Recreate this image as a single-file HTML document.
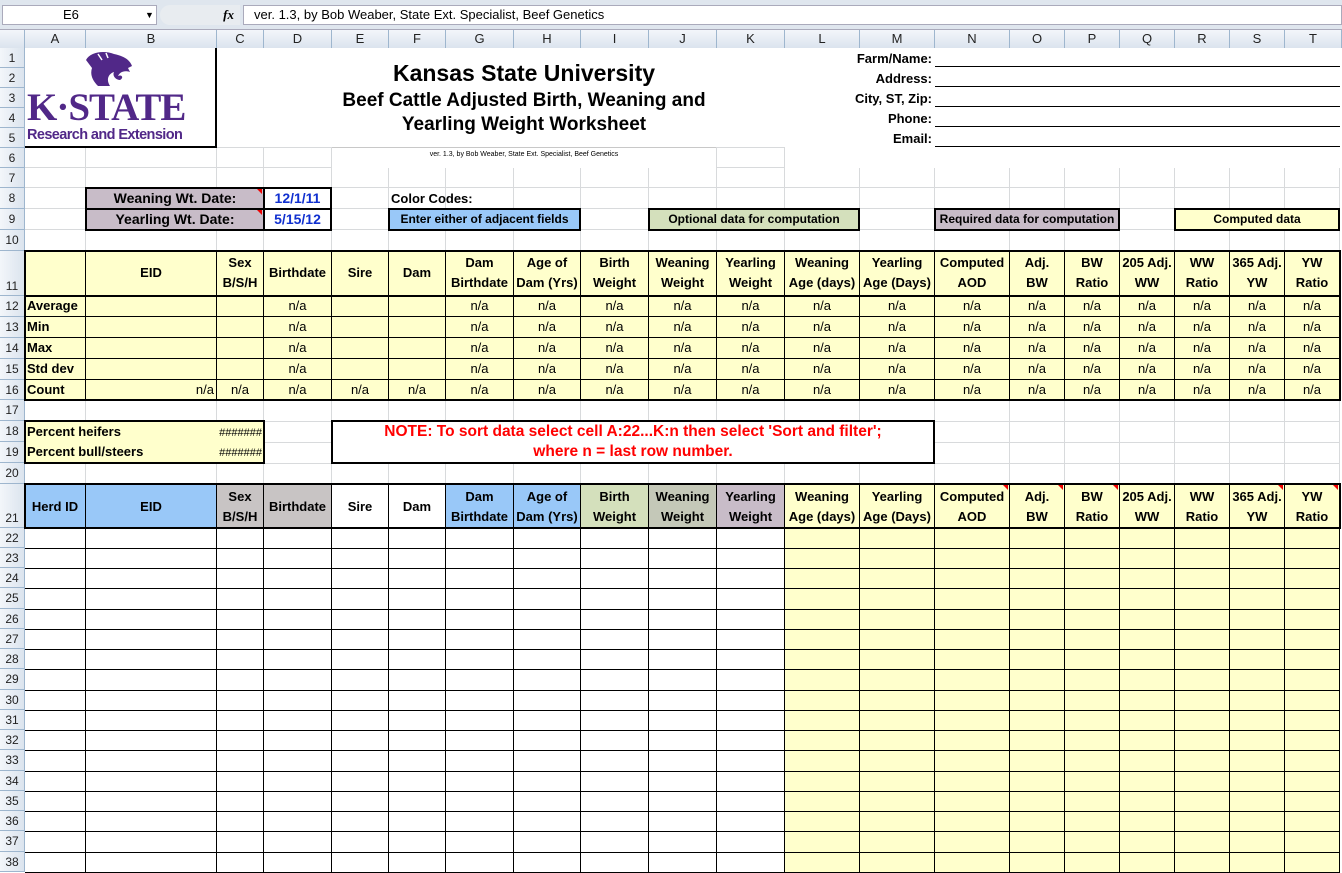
<!DOCTYPE html>
<html><head><meta charset="utf-8"><style>
*{box-sizing:border-box;margin:0;padding:0}
body{width:1342px;height:872px;overflow:hidden;background:#fff;font-family:"Liberation Sans",Arial,sans-serif;position:relative}
.a{position:absolute}
#fb{left:0;top:0;width:1342px;height:30px;background:#dfe6ee;border-bottom:1px solid #aab}
#grid{position:absolute;left:25px;top:48px;border-collapse:separate;border-spacing:0;table-layout:fixed;width:1315px}
#grid td{border-right:1px solid #d8dadc;border-bottom:1px solid #d8dadc;font-size:13px;font-weight:bold;text-align:center;line-height:20px;overflow:hidden;white-space:nowrap;padding:0 2px}
#grid tr.k td{border-right-color:#000;border-bottom-color:#000}
#grid td.n{font-weight:normal}
#grid td.l{text-align:left}
#grid td.r{text-align:right}
.y{background:#ffffcc}
.bl{background:#99c8f8}
.gn{background:#d4e0bc}
.gg{background:#c4c8b8}
.mv{background:#c8bcc8}
.gy{background:#c8c4c4}
.box{position:absolute;border:2px solid #000}
.ch{position:absolute;top:30px;height:18px;font-size:13px;color:#222;text-align:center;line-height:18px;border-right:1px solid #9eb6ce;background:linear-gradient(#f3f6fa,#dbe4ee)}
.rh{position:absolute;left:0;width:25px;font-size:12px;color:#222;text-align:center;border-bottom:1px solid #9eb6ce;background:linear-gradient(90deg,#f3f6fa,#dbe4ee);border-right:1px solid #9eb6ce}
.w{position:absolute;background:#fff}
.t{position:absolute;font-size:13px;font-weight:bold;white-space:nowrap}
.cc{text-align:center;font-size:12px;font-weight:bold;line-height:19px}
</style></head><body>
<div id="fb" class="a">
 <div class="a" style="left:2px;top:5px;width:155px;height:20px;background:#fff;border:1px solid #aab;font-size:13px;line-height:18px;padding-left:60px">E6<span style="position:absolute;left:142px;font-size:9px">▼</span></div>
 <div class="a" style="left:160px;top:5px;width:80px;height:20px;background:#e8ecf0;border-radius:10px 0 0 10px;font-style:italic;font-size:13px;line-height:20px;text-align:right;padding-right:6px;font-family:'Liberation Serif',serif;font-weight:bold">fx</div>
 <div class="a" style="left:243px;top:5px;width:1099px;height:20px;background:#fff;border:1px solid #aab;font-size:13px;line-height:18px;padding-left:10px">ver. 1.3, by Bob Weaber, State Ext. Specialist, Beef Genetics</div>
</div>
<div class="ch" style="left:0;width:25px"></div>
<div class="ch" style="left:25px;width:61px">A</div><div class="ch" style="left:86px;width:131px">B</div><div class="ch" style="left:217px;width:47px">C</div><div class="ch" style="left:264px;width:68px">D</div><div class="ch" style="left:332px;width:57px">E</div><div class="ch" style="left:389px;width:57px">F</div><div class="ch" style="left:446px;width:68px">G</div><div class="ch" style="left:514px;width:67px">H</div><div class="ch" style="left:581px;width:68px">I</div><div class="ch" style="left:649px;width:68px">J</div><div class="ch" style="left:717px;width:68px">K</div><div class="ch" style="left:785px;width:75px">L</div><div class="ch" style="left:860px;width:75px">M</div><div class="ch" style="left:935px;width:75px">N</div><div class="ch" style="left:1010px;width:55px">O</div><div class="ch" style="left:1065px;width:55px">P</div><div class="ch" style="left:1120px;width:55px">Q</div><div class="ch" style="left:1175px;width:55px">R</div><div class="ch" style="left:1230px;width:55px">S</div><div class="ch" style="left:1285px;width:57px">T</div>

<div class="rh" style="top:48px;height:20px;line-height:20px">1</div><div class="rh" style="top:68px;height:20px;line-height:20px">2</div><div class="rh" style="top:88px;height:20px;line-height:20px">3</div><div class="rh" style="top:108px;height:20px;line-height:20px">4</div><div class="rh" style="top:128px;height:20px;line-height:20px">5</div><div class="rh" style="top:148px;height:20px;line-height:20px">6</div><div class="rh" style="top:168px;height:20px;line-height:20px">7</div><div class="rh" style="top:188px;height:21px;line-height:21px">8</div><div class="rh" style="top:209px;height:21px;line-height:21px">9</div><div class="rh" style="top:230px;height:21px;line-height:21px">10</div><div class="rh" style="top:251px;height:45px;line-height:70px">11</div><div class="rh" style="top:296px;height:21px;line-height:21px">12</div><div class="rh" style="top:317px;height:21px;line-height:21px">13</div><div class="rh" style="top:338px;height:21px;line-height:21px">14</div><div class="rh" style="top:359px;height:21px;line-height:21px">15</div><div class="rh" style="top:380px;height:20px;line-height:20px">16</div><div class="rh" style="top:400px;height:21px;line-height:21px">17</div><div class="rh" style="top:421px;height:21px;line-height:21px">18</div><div class="rh" style="top:442px;height:21px;line-height:21px">19</div><div class="rh" style="top:463px;height:21px;line-height:21px">20</div><div class="rh" style="top:484px;height:44px;line-height:68px">21</div>
<div class="rh" style="top:528px;height:20px;line-height:20px">22</div><div class="rh" style="top:548px;height:20px;line-height:20px">23</div><div class="rh" style="top:568px;height:20px;line-height:20px">24</div><div class="rh" style="top:588px;height:21px;line-height:21px">25</div><div class="rh" style="top:609px;height:20px;line-height:20px">26</div><div class="rh" style="top:629px;height:20px;line-height:20px">27</div><div class="rh" style="top:649px;height:20px;line-height:20px">28</div><div class="rh" style="top:669px;height:21px;line-height:21px">29</div><div class="rh" style="top:690px;height:20px;line-height:20px">30</div><div class="rh" style="top:710px;height:20px;line-height:20px">31</div><div class="rh" style="top:730px;height:20px;line-height:20px">32</div><div class="rh" style="top:750px;height:21px;line-height:21px">33</div><div class="rh" style="top:771px;height:20px;line-height:20px">34</div><div class="rh" style="top:791px;height:20px;line-height:20px">35</div><div class="rh" style="top:811px;height:20px;line-height:20px">36</div><div class="rh" style="top:831px;height:21px;line-height:21px">37</div><div class="rh" style="top:852px;height:20px;line-height:20px">38</div>

<table id="grid">
<colgroup><col style="width:61px"><col style="width:131px"><col style="width:47px"><col style="width:68px"><col style="width:57px"><col style="width:57px"><col style="width:68px"><col style="width:67px"><col style="width:68px"><col style="width:68px"><col style="width:68px"><col style="width:75px"><col style="width:75px"><col style="width:75px"><col style="width:55px"><col style="width:55px"><col style="width:55px"><col style="width:55px"><col style="width:55px"><col style="width:55px"></colgroup>
<tr style="height:20px"><td></td><td></td><td></td><td></td><td></td><td></td><td></td><td></td><td></td><td></td><td></td><td></td><td></td><td></td><td></td><td></td><td></td><td></td><td></td><td></td></tr>
<tr style="height:20px"><td></td><td></td><td></td><td></td><td></td><td></td><td></td><td></td><td></td><td></td><td></td><td></td><td></td><td></td><td></td><td></td><td></td><td></td><td></td><td></td></tr>
<tr style="height:20px"><td></td><td></td><td></td><td></td><td></td><td></td><td></td><td></td><td></td><td></td><td></td><td></td><td></td><td></td><td></td><td></td><td></td><td></td><td></td><td></td></tr>
<tr style="height:20px"><td></td><td></td><td></td><td></td><td></td><td></td><td></td><td></td><td></td><td></td><td></td><td></td><td></td><td></td><td></td><td></td><td></td><td></td><td></td><td></td></tr>
<tr style="height:20px"><td></td><td></td><td></td><td></td><td></td><td></td><td></td><td></td><td></td><td></td><td></td><td></td><td></td><td></td><td></td><td></td><td></td><td></td><td></td><td></td></tr>
<tr style="height:20px"><td></td><td></td><td></td><td></td><td></td><td></td><td></td><td></td><td></td><td></td><td></td><td></td><td></td><td></td><td></td><td></td><td></td><td></td><td></td><td></td></tr>
<tr style="height:20px"><td></td><td></td><td></td><td></td><td></td><td></td><td></td><td></td><td></td><td></td><td></td><td></td><td></td><td></td><td></td><td></td><td></td><td></td><td></td><td></td></tr>
<tr style="height:21px"><td></td><td></td><td></td><td></td><td></td><td></td><td></td><td></td><td></td><td></td><td></td><td></td><td></td><td></td><td></td><td></td><td></td><td></td><td></td><td></td></tr>
<tr style="height:21px"><td></td><td></td><td></td><td></td><td></td><td></td><td></td><td></td><td></td><td></td><td></td><td></td><td></td><td></td><td></td><td></td><td></td><td></td><td></td><td></td></tr>
<tr style="height:21px"><td></td><td></td><td></td><td></td><td></td><td></td><td></td><td></td><td></td><td></td><td></td><td></td><td></td><td></td><td></td><td></td><td></td><td></td><td></td><td></td></tr>
<tr class="k y" style="height:45px"><td></td><td>EID</td><td style="white-space:normal">Sex<br>B/S/H</td><td>Birthdate</td><td>Sire</td><td>Dam</td><td style="white-space:normal">Dam<br>Birthdate</td><td style="white-space:normal">Age of<br>Dam (Yrs)</td><td style="white-space:normal">Birth<br>Weight</td><td style="white-space:normal">Weaning<br>Weight</td><td style="white-space:normal">Yearling<br>Weight</td><td style="white-space:normal">Weaning<br>Age (days)</td><td style="white-space:normal">Yearling<br>Age (Days)</td><td style="white-space:normal">Computed<br>AOD</td><td style="white-space:normal">Adj.<br>BW</td><td style="white-space:normal">BW<br>Ratio</td><td style="white-space:normal">205 Adj.<br>WW</td><td style="white-space:normal">WW<br>Ratio</td><td style="white-space:normal">365 Adj.<br>YW</td><td style="white-space:normal">YW<br>Ratio</td></tr>
<tr class="k y" style="height:21px"><td class="l">Average</td><td></td><td></td><td class="n">n/a</td><td></td><td></td><td class="n">n/a</td><td class="n">n/a</td><td class="n">n/a</td><td class="n">n/a</td><td class="n">n/a</td><td class="n">n/a</td><td class="n">n/a</td><td class="n">n/a</td><td class="n">n/a</td><td class="n">n/a</td><td class="n">n/a</td><td class="n">n/a</td><td class="n">n/a</td><td class="n">n/a</td></tr>
<tr class="k y" style="height:21px"><td class="l">Min</td><td></td><td></td><td class="n">n/a</td><td></td><td></td><td class="n">n/a</td><td class="n">n/a</td><td class="n">n/a</td><td class="n">n/a</td><td class="n">n/a</td><td class="n">n/a</td><td class="n">n/a</td><td class="n">n/a</td><td class="n">n/a</td><td class="n">n/a</td><td class="n">n/a</td><td class="n">n/a</td><td class="n">n/a</td><td class="n">n/a</td></tr>
<tr class="k y" style="height:21px"><td class="l">Max</td><td></td><td></td><td class="n">n/a</td><td></td><td></td><td class="n">n/a</td><td class="n">n/a</td><td class="n">n/a</td><td class="n">n/a</td><td class="n">n/a</td><td class="n">n/a</td><td class="n">n/a</td><td class="n">n/a</td><td class="n">n/a</td><td class="n">n/a</td><td class="n">n/a</td><td class="n">n/a</td><td class="n">n/a</td><td class="n">n/a</td></tr>
<tr class="k y" style="height:21px"><td class="l">Std dev</td><td></td><td></td><td class="n">n/a</td><td></td><td></td><td class="n">n/a</td><td class="n">n/a</td><td class="n">n/a</td><td class="n">n/a</td><td class="n">n/a</td><td class="n">n/a</td><td class="n">n/a</td><td class="n">n/a</td><td class="n">n/a</td><td class="n">n/a</td><td class="n">n/a</td><td class="n">n/a</td><td class="n">n/a</td><td class="n">n/a</td></tr>
<tr class="k y" style="height:20px"><td class="l">Count</td><td class="n r">n/a</td><td class="n">n/a</td><td class="n">n/a</td><td class="n">n/a</td><td class="n">n/a</td><td class="n">n/a</td><td class="n">n/a</td><td class="n">n/a</td><td class="n">n/a</td><td class="n">n/a</td><td class="n">n/a</td><td class="n">n/a</td><td class="n">n/a</td><td class="n">n/a</td><td class="n">n/a</td><td class="n">n/a</td><td class="n">n/a</td><td class="n">n/a</td><td class="n">n/a</td></tr>
<tr style="height:21px"><td></td><td></td><td></td><td></td><td></td><td></td><td></td><td></td><td></td><td></td><td></td><td></td><td></td><td></td><td></td><td></td><td></td><td></td><td></td><td></td></tr>
<tr style="height:21px"><td></td><td></td><td></td><td></td><td></td><td></td><td></td><td></td><td></td><td></td><td></td><td></td><td></td><td></td><td></td><td></td><td></td><td></td><td></td><td></td></tr>
<tr style="height:21px"><td></td><td></td><td></td><td></td><td></td><td></td><td></td><td></td><td></td><td></td><td></td><td></td><td></td><td></td><td></td><td></td><td></td><td></td><td></td><td></td></tr>
<tr style="height:21px"><td></td><td></td><td></td><td></td><td></td><td></td><td></td><td></td><td></td><td></td><td></td><td></td><td></td><td></td><td></td><td></td><td></td><td></td><td></td><td></td></tr>
<tr class="k" style="height:44px"><td class="bl">Herd ID</td><td class="bl">EID</td><td class="gy" style="white-space:normal">Sex<br>B/S/H</td><td class="gy">Birthdate</td><td>Sire</td><td>Dam</td><td class="bl" style="white-space:normal">Dam<br>Birthdate</td><td class="bl" style="white-space:normal">Age of<br>Dam (Yrs)</td><td class="gn" style="white-space:normal">Birth<br>Weight</td><td class="gg" style="white-space:normal">Weaning<br>Weight</td><td class="mv" style="white-space:normal">Yearling<br>Weight</td><td class="y" style="white-space:normal">Weaning<br>Age (days)</td><td class="y" style="white-space:normal">Yearling<br>Age (Days)</td><td class="y" style="white-space:normal">Computed<br>AOD</td><td class="y" style="white-space:normal">Adj.<br>BW</td><td class="y" style="white-space:normal">BW<br>Ratio</td><td class="y" style="white-space:normal">205 Adj.<br>WW</td><td class="y" style="white-space:normal">WW<br>Ratio</td><td class="y" style="white-space:normal">365 Adj.<br>YW</td><td class="y" style="white-space:normal">YW<br>Ratio</td></tr>
<tr class="k" style="height:20px"><td></td><td></td><td></td><td></td><td></td><td></td><td></td><td></td><td></td><td></td><td></td><td class="y"></td><td class="y"></td><td class="y"></td><td class="y"></td><td class="y"></td><td class="y"></td><td class="y"></td><td class="y"></td><td class="y"></td></tr>
<tr class="k" style="height:20px"><td></td><td></td><td></td><td></td><td></td><td></td><td></td><td></td><td></td><td></td><td></td><td class="y"></td><td class="y"></td><td class="y"></td><td class="y"></td><td class="y"></td><td class="y"></td><td class="y"></td><td class="y"></td><td class="y"></td></tr>
<tr class="k" style="height:20px"><td></td><td></td><td></td><td></td><td></td><td></td><td></td><td></td><td></td><td></td><td></td><td class="y"></td><td class="y"></td><td class="y"></td><td class="y"></td><td class="y"></td><td class="y"></td><td class="y"></td><td class="y"></td><td class="y"></td></tr>
<tr class="k" style="height:21px"><td></td><td></td><td></td><td></td><td></td><td></td><td></td><td></td><td></td><td></td><td></td><td class="y"></td><td class="y"></td><td class="y"></td><td class="y"></td><td class="y"></td><td class="y"></td><td class="y"></td><td class="y"></td><td class="y"></td></tr>
<tr class="k" style="height:20px"><td></td><td></td><td></td><td></td><td></td><td></td><td></td><td></td><td></td><td></td><td></td><td class="y"></td><td class="y"></td><td class="y"></td><td class="y"></td><td class="y"></td><td class="y"></td><td class="y"></td><td class="y"></td><td class="y"></td></tr>
<tr class="k" style="height:20px"><td></td><td></td><td></td><td></td><td></td><td></td><td></td><td></td><td></td><td></td><td></td><td class="y"></td><td class="y"></td><td class="y"></td><td class="y"></td><td class="y"></td><td class="y"></td><td class="y"></td><td class="y"></td><td class="y"></td></tr>
<tr class="k" style="height:20px"><td></td><td></td><td></td><td></td><td></td><td></td><td></td><td></td><td></td><td></td><td></td><td class="y"></td><td class="y"></td><td class="y"></td><td class="y"></td><td class="y"></td><td class="y"></td><td class="y"></td><td class="y"></td><td class="y"></td></tr>
<tr class="k" style="height:21px"><td></td><td></td><td></td><td></td><td></td><td></td><td></td><td></td><td></td><td></td><td></td><td class="y"></td><td class="y"></td><td class="y"></td><td class="y"></td><td class="y"></td><td class="y"></td><td class="y"></td><td class="y"></td><td class="y"></td></tr>
<tr class="k" style="height:20px"><td></td><td></td><td></td><td></td><td></td><td></td><td></td><td></td><td></td><td></td><td></td><td class="y"></td><td class="y"></td><td class="y"></td><td class="y"></td><td class="y"></td><td class="y"></td><td class="y"></td><td class="y"></td><td class="y"></td></tr>
<tr class="k" style="height:20px"><td></td><td></td><td></td><td></td><td></td><td></td><td></td><td></td><td></td><td></td><td></td><td class="y"></td><td class="y"></td><td class="y"></td><td class="y"></td><td class="y"></td><td class="y"></td><td class="y"></td><td class="y"></td><td class="y"></td></tr>
<tr class="k" style="height:20px"><td></td><td></td><td></td><td></td><td></td><td></td><td></td><td></td><td></td><td></td><td></td><td class="y"></td><td class="y"></td><td class="y"></td><td class="y"></td><td class="y"></td><td class="y"></td><td class="y"></td><td class="y"></td><td class="y"></td></tr>
<tr class="k" style="height:21px"><td></td><td></td><td></td><td></td><td></td><td></td><td></td><td></td><td></td><td></td><td></td><td class="y"></td><td class="y"></td><td class="y"></td><td class="y"></td><td class="y"></td><td class="y"></td><td class="y"></td><td class="y"></td><td class="y"></td></tr>
<tr class="k" style="height:20px"><td></td><td></td><td></td><td></td><td></td><td></td><td></td><td></td><td></td><td></td><td></td><td class="y"></td><td class="y"></td><td class="y"></td><td class="y"></td><td class="y"></td><td class="y"></td><td class="y"></td><td class="y"></td><td class="y"></td></tr>
<tr class="k" style="height:20px"><td></td><td></td><td></td><td></td><td></td><td></td><td></td><td></td><td></td><td></td><td></td><td class="y"></td><td class="y"></td><td class="y"></td><td class="y"></td><td class="y"></td><td class="y"></td><td class="y"></td><td class="y"></td><td class="y"></td></tr>
<tr class="k" style="height:20px"><td></td><td></td><td></td><td></td><td></td><td></td><td></td><td></td><td></td><td></td><td></td><td class="y"></td><td class="y"></td><td class="y"></td><td class="y"></td><td class="y"></td><td class="y"></td><td class="y"></td><td class="y"></td><td class="y"></td></tr>
<tr class="k" style="height:21px"><td></td><td></td><td></td><td></td><td></td><td></td><td></td><td></td><td></td><td></td><td></td><td class="y"></td><td class="y"></td><td class="y"></td><td class="y"></td><td class="y"></td><td class="y"></td><td class="y"></td><td class="y"></td><td class="y"></td></tr>
<tr class="k" style="height:20px"><td></td><td></td><td></td><td></td><td></td><td></td><td></td><td></td><td></td><td></td><td></td><td class="y"></td><td class="y"></td><td class="y"></td><td class="y"></td><td class="y"></td><td class="y"></td><td class="y"></td><td class="y"></td><td class="y"></td></tr>
</table>

<!-- header white masks -->
<div class="w" style="left:25px;top:48px;width:1316px;height:99px"></div>
<div class="w" style="left:332px;top:147px;width:384px;height:21px"></div>
<div class="w" style="left:785px;top:147px;width:556px;height:21px"></div>
<div class="a" style="left:332px;top:147px;width:384px;height:1px;background:#c8c8c8"></div>

<!-- logo -->
<div class="a" style="left:25px;top:48px;width:192px;height:100px;border-right:2px solid #000;border-bottom:2px solid #000"></div>
<svg class="a" style="left:84px;top:50px" width="50" height="38" viewBox="0 0 50 38"><path d="M2 10 C6 2 20 0 30 4 C40 6 46 10 48 16 L44 18 L46 22 C40 20 36 22 34 26 C38 24 40 28 36 30 C32 30 28 26 30 22 C24 24 22 30 26 36 L14 36 C8 30 6 24 8 18 Z" fill="#512888"/><path d="M14 4 L18 10 M22 3 L24 8" stroke="#fff" stroke-width="1.5"/></svg>
<div class="a" style="left:27px;top:89px;font-family:'Liberation Serif',serif;font-weight:bold;font-size:39px;line-height:38px;color:#512888;letter-spacing:-1px">K·STATE</div>
<div class="a" style="left:27px;top:127px;font-size:14.5px;font-weight:bold;color:#512888;letter-spacing:-0.6px">Research and Extension</div>

<!-- title -->
<div class="a" style="left:300px;top:60px;width:448px;text-align:center;font-weight:bold;font-size:23px">Kansas State University</div>
<div class="a" style="left:300px;top:89px;width:448px;text-align:center;font-weight:bold;font-size:19px;line-height:24px">Beef Cattle Adjusted Birth, Weaning and<br>Yearling Weight Worksheet</div>
<div class="a" style="left:332px;top:151px;width:384px;text-align:center;font-size:7px">ver. 1.3, by Bob Weaber, State Ext. Specialist, Beef Genetics</div>

<!-- farm -->
<div class="t" style="right:410px;top:51px">Farm/Name:</div>
<div class="t" style="right:410px;top:71px">Address:</div>
<div class="t" style="right:410px;top:91px">City, ST, Zip:</div>
<div class="t" style="right:410px;top:111px">Phone:</div>
<div class="t" style="right:410px;top:131px">Email:</div>
<div class="a" style="left:935px;top:66px;width:405px;height:1px;background:#000"></div>
<div class="a" style="left:935px;top:86px;width:405px;height:1px;background:#000"></div>
<div class="a" style="left:935px;top:106px;width:405px;height:1px;background:#000"></div>
<div class="a" style="left:935px;top:126px;width:405px;height:1px;background:#000"></div>
<div class="a" style="left:935px;top:146px;width:405px;height:1px;background:#000"></div>

<!-- dates -->
<div class="box mv" style="left:85px;top:187px;width:180px;height:23px;text-align:center;font-weight:bold;font-size:14px;line-height:19px">Weaning Wt. Date:</div>
<div class="box mv" style="left:85px;top:208px;width:180px;height:23px;text-align:center;font-weight:bold;font-size:14px;line-height:19px">Yearling Wt. Date:</div>
<div class="box" style="left:263px;top:187px;width:69px;height:23px;background:#fff;text-align:center;font-weight:bold;font-size:14px;line-height:19px;color:#1030d0">12/1/11</div>
<div class="box" style="left:263px;top:208px;width:69px;height:23px;background:#fff;text-align:center;font-weight:bold;font-size:14px;line-height:19px;color:#1030d0">5/15/12</div>
<div class="t" style="left:391px;top:191px;font-size:13px">Color Codes:</div>
<div class="box bl cc" style="left:388px;top:208px;width:193px;height:23px">Enter either of adjacent fields</div>
<div class="box gn cc" style="left:648px;top:208px;width:212px;height:23px">Optional data for computation</div>
<div class="box mv cc" style="left:934px;top:208px;width:186px;height:23px">Required data for computation</div>
<div class="box y cc" style="left:1174px;top:208px;width:166px;height:23px">Computed data</div>
<div class="a" style="left:257px;top:189px;width:0;height:0;border-left:5px solid transparent;border-top:5px solid #e00"></div>
<div class="a" style="left:257px;top:210px;width:0;height:0;border-left:5px solid transparent;border-top:5px solid #e00"></div>

<!-- summary box -->
<div class="box" style="left:24px;top:250px;width:1317px;height:151px"></div>
<div class="a" style="left:24px;top:295px;width:1317px;height:2px;background:#000"></div>

<!-- percent -->
<div class="box y" style="left:24px;top:420px;width:241px;height:44px;font-weight:bold;font-size:13px;line-height:20px;padding-left:1px">Percent heifers<br>Percent bull/steers</div>
<div class="a" style="left:206px;top:423px;font-size:11px;line-height:20px;text-align:right;width:56px">#######<br>#######</div>
<div class="box" style="left:331px;top:420px;width:604px;height:44px;background:#fff;text-align:center;font-weight:bold;font-size:15.5px;line-height:20px;color:#f00">NOTE: To sort data select cell A:22...K:n then select 'Sort and filter';<br>where n = last row number.</div>

<!-- header row 21 box -->
<div class="box" style="left:24px;top:483px;width:1317px;height:46px"></div>
<div class="a" style="left:1003px;top:485px;border-left:5px solid transparent;border-top:5px solid #e00"></div>
<div class="a" style="left:1058px;top:485px;border-left:5px solid transparent;border-top:5px solid #e00"></div>
<div class="a" style="left:1113px;top:485px;border-left:5px solid transparent;border-top:5px solid #e00"></div>
<div class="a" style="left:1278px;top:485px;border-left:5px solid transparent;border-top:5px solid #e00"></div>
<div class="a" style="left:1333px;top:485px;border-left:5px solid transparent;border-top:5px solid #e00"></div>
</body></html>
